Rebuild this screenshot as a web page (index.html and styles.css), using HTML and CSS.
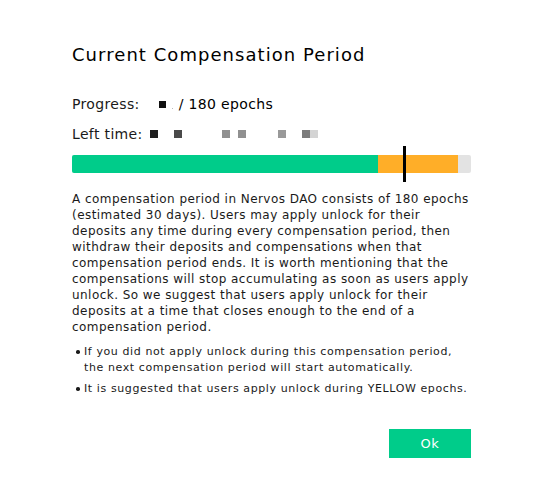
FILE: index.html
```html
<!DOCTYPE html>
<html>
<head>
<meta charset="utf-8">
<link rel="stylesheet" href="styles.css">
</head>
<body>
<div class="dialog">
  <h1 class="title">Current Compensation Period</h1>
  <div class="row progress">
    <span class="label">Progress:</span>
    <span class="sq sq-black"></span>
    <span class="dot"></span>
    <span class="epochs">/ 180 epochs</span>
  </div>
  <div class="row lefttime">
    <span class="label">Left time:</span>
    <span class="blocks">
      <span class="sq8 c1"></span>
      <span class="sq8 c2 g1"></span>
      <span class="sq8 c3 g2"></span>
      <span class="sq8 c3 g3"></span>
      <span class="sq8 c4 g4"></span>
      <span class="sq8 c5 g5"></span><span class="sq8 c6"></span>
    </span>
  </div>
  <div class="bar">
    <div class="seg green"></div>
    <div class="seg yellow"></div>
    <div class="marker"></div>
  </div>
  <p class="desc">A compensation period in Nervos DAO consists of 180 epochs (estimated 30 days). Users may apply unlock for their deposits any time during every compensation period, then withdraw their deposits and compensations when that compensation period ends. It is worth mentioning that the compensations will stop accumulating as soon as users apply unlock. So we suggest that users apply unlock for their deposits at a time that closes enough to the end of a compensation period.</p>
  <ul class="notes">
    <li>If you did not apply unlock during this compensation period, the next compensation period will start automatically.</li>
    <li>It is suggested that users apply unlock during YELLOW epochs.</li>
  </ul>
  <div class="actions">
    <button class="ok">Ok</button>
  </div>
</div>
</body>
</html>
```
FILE: styles.css
```css
html, body {
  margin: 0;
  padding: 0;
  background: #fff;
}
body {
  font-family: "DejaVu Sans", "Open Sans", sans-serif;
  color: #1a1a1a;
}
.dialog {
  width: 399px;
  padding: 40px 72px 0;
}
.title {
  margin: 0;
  font-size: 18px;
  font-weight: 500;
  letter-spacing: 1.05px;
  line-height: 30px;
  color: #000;
}
.row {
  display: flex;
  align-items: center;
  height: 20px;
  font-size: 14px;
  letter-spacing: 0.35px;
}
.progress {
  margin-top: 24px;
}
.lefttime {
  margin-top: 10px;
}
.label {
  color: #1a1a1a;
}
.sq {
  width: 7px;
  height: 7px;
  background: #111;
  margin-left: 19px;
}
.dot {
  width: 1px;
  height: 1px;
  background: #bbb;
  margin-left: 6px;
  align-self: flex-end;
  margin-bottom: 5px;
}
.epochs {
  margin-left: 6px;
  font-weight: 500;
  color: #000;
}
.blocks {
  display: flex;
  margin-left: 7px;
}
.sq8 {
  width: 8px;
  height: 8px;
}
.c1 { background: #1e1e1e; }
.c2 { background: #4a4a4a; }
.c3 { background: #909090; }
.c4 { background: #999; }
.c5 { background: #7c7c7c; }
.c6 { background: #d4d4d4; }
.g1 { margin-left: 16px; }
.g2 { margin-left: 40px; }
.g3 { margin-left: 8px; }
.g4 { margin-left: 32px; }
.g5 { margin-left: 16px; }
.bar {
  position: relative;
  display: flex;
  height: 18px;
  margin-top: 11px;
  background: #e3e3e3;
  border-radius: 2px;
}
.seg.green {
  width: 306px;
  background: #00cc8a;
  border-radius: 2px 0 0 2px;
}
.seg.yellow {
  width: 80px;
  background: #ffae28;
}
.marker {
  position: absolute;
  left: 331px;
  top: -9px;
  width: 3px;
  height: 36px;
  background: #000;
}
.desc {
  margin: 18px 0 0;
  font-size: 12px;
  letter-spacing: 0.45px;
  line-height: 16px;
  color: #1a1a1a;
}
.notes {
  list-style: none;
  margin: 9px 0 0;
  padding: 0;
  font-size: 11px;
  letter-spacing: 0.6px;
  line-height: 16px;
  color: #1a1a1a;
}
.notes li {
  position: relative;
  padding-left: 12px;
}
.notes li + li {
  margin-top: 5px;
}
.notes li::before {
  content: "";
  position: absolute;
  left: 4px;
  top: 6px;
  width: 3.5px;
  height: 3.5px;
  border-radius: 50%;
  background: #1a1a1a;
}
.actions {
  display: flex;
  justify-content: flex-end;
  margin-top: 32px;
}
.ok {
  width: 82px;
  height: 29px;
  border: none;
  background: #00cc8a;
  color: #fff;
  font-family: inherit;
  font-size: 13px;
  letter-spacing: 0.5px;
  cursor: pointer;
}
```
